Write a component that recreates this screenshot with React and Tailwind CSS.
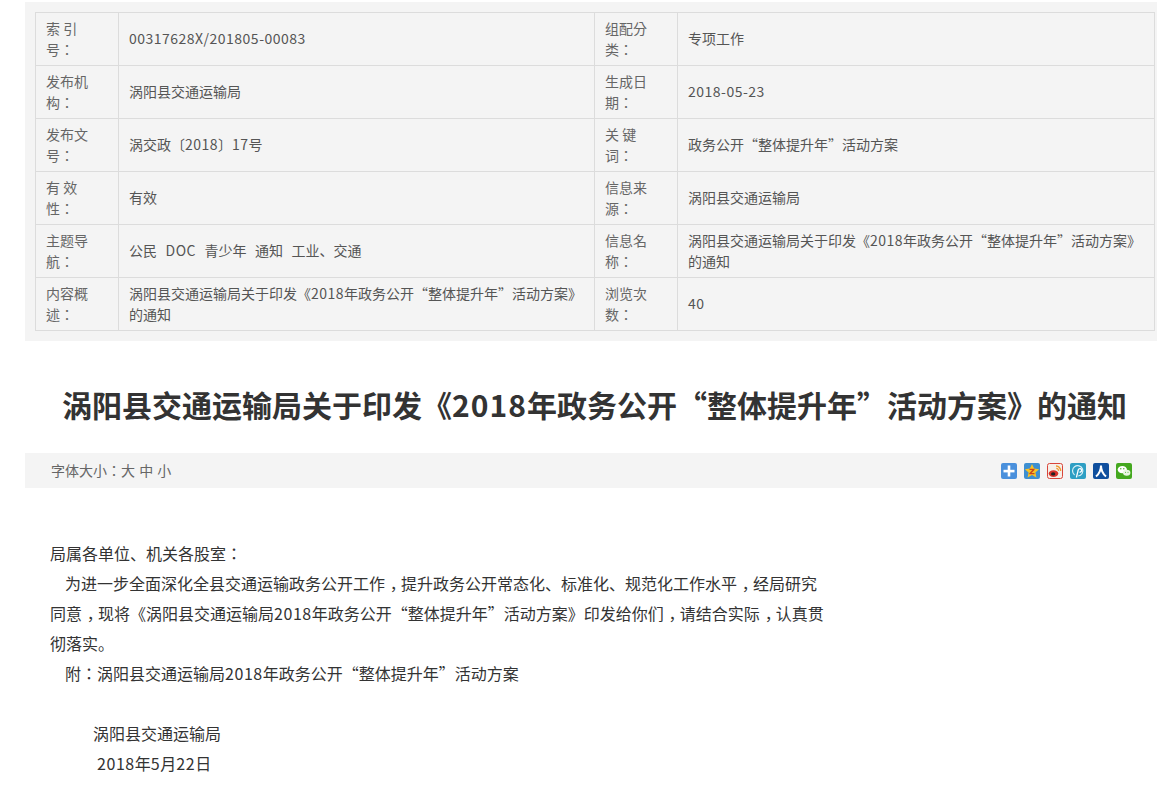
const rows = [
  ['索 引号：', '00317628X/201805-00083', '组配分类：', '专项工作'],
  ['发布机构：', '涡阳县交通运输局', '生成日期：', '2018-05-23'],
  ['发布文号：', '涡交政〔2018〕17号', '关 键词：', '政务公开“整体提升年”活动方案'],
  ['有 效性：', '有效', '信息来源：', '涡阳县交通运输局'],
  ['主题导航：', '公民   DOC   青少年   通知   工业、交通', '信息名称：', '涡阳县交通运输局关于印发《2018年政务公开“整体提升年”活动方案》\n的通知'],
  ['内容概述：', '涡阳县交通运输局关于印发《2018年政务公开“整体提升年”活动方案》\n的通知', '浏览次数：', '40'],
];

// latin runs run a bit wider in the original, and its colons and commas sit further right
function T({ children }) {
  return children.split(/([0-9A-Z/-]+|，|：)/).map((part, i) => {
    if (part === '：') return <span key={i} className="font-['Noto_Sans_CJK_TC',sans-serif]">{part}</span>;
    if (part === '，') return <span key={i} className="[font-feature-settings:'halt'] pl-[0.3em] pr-[0.2em]">{part}</span>;
    if (i % 2 === 1) return <span key={i} className="tracking-[0.035em]">{part}</span>;
    return part;
  });
}

function Label({ children }) {
  return (
    <div className="border-r border-b border-[#dcdcdc] pl-[10px] pr-[24px] py-[5px] leading-[21px] text-[14px] text-[#666] font-['Noto_Sans_CJK_TC',sans-serif]">
      {children}
    </div>
  );
}

function Value({ children }) {
  const lines = children.split('\n');
  return (
    <div className={lines.length > 1
      ? 'border-r border-b border-[#dcdcdc] px-[10px] flex flex-col justify-center leading-[21px] text-[14px] text-[#555] whitespace-pre'
      : 'border-r border-b border-[#dcdcdc] px-[10px] pb-[2px] flex flex-col justify-center leading-[21px] text-[14px] text-[#555] whitespace-pre [word-spacing:-0.3px]'}>
      {lines.map((line, i) => <div key={i}><T>{line}</T></div>)}
    </div>
  );
}

function ShareIcons() {
  return (
    <div className="flex gap-[7px]">
      <svg width="16" height="16" viewBox="0 0 16 16">
        <rect width="16" height="16" rx="2" fill="#4a90dc" />
        <rect x="2.5" y="6.8" width="11" height="2.6" fill="#fff" />
        <rect x="6.7" y="2.5" width="2.6" height="11" fill="#fff" />
      </svg>
      <svg width="16" height="16" viewBox="0 0 16 16">
        <rect width="16" height="16" rx="2" fill="#3d8fd1" />
        <path d="M8 1l2.1 4.6 5 .6-3.7 3.3 1 4.9L8 11.9l-4.4 2.5 1-4.9L.9 6.2l5-.6z" fill="#f7c325" />
        <path d="M5.5 5.8h5v1.1l-3 3.2h3v1.2h-5.2v-1.1l3-3.2H5.5z" fill="#c8451d" />
      </svg>
      <svg width="16" height="16" viewBox="0 0 16 16">
        <rect x=".5" y=".5" width="15" height="15" rx="2" fill="#f6efe8" stroke="#d8453a" />
        <ellipse cx="6.5" cy="10.6" rx="4.8" ry="3.4" fill="#d8332c" />
        <ellipse cx="6.2" cy="10.9" rx="2.2" ry="1.7" fill="#222" />
        <path d="M9 3a4.5 4.5 0 0 1 4.6 5" fill="none" stroke="#ee9a2e" strokeWidth="1.4" />
        <path d="M9.3 5.3a2.2 2.2 0 0 1 2.1 2.6" fill="none" stroke="#ee9a2e" strokeWidth="1.2" />
      </svg>
      <svg width="16" height="16" viewBox="0 0 16 16">
        <rect width="16" height="16" rx="2" fill="#2e9fc4" />
        <path d="M4.6 12a5.2 5.2 0 1 1 3.6 1" fill="none" stroke="#d8f0f7" strokeWidth="1.2" />
        <path d="M6.4 14.5l1.8-7.3a1.7 1.7 0 1 1 1.2 1.8" fill="none" stroke="#fff" strokeWidth="1.3" />
      </svg>
      <svg width="16" height="16" viewBox="0 0 16 16">
        <rect width="16" height="16" rx="2" fill="#0f4f9e" />
        <path d="M8 2.5c0 4.5-1.5 8-5 11M8 2.5c0 4.5 1.5 8 5 11" fill="none" stroke="#fff" strokeWidth="2" />
      </svg>
      <svg width="16" height="16" viewBox="0 0 16 16">
        <rect width="16" height="16" rx="2" fill="#44a81f" />
        <ellipse cx="6.3" cy="6.6" rx="4.6" ry="3.7" fill="#fff" />
        <ellipse cx="10.7" cy="9.8" rx="3.7" ry="3" fill="#e9f6e2" />
        <circle cx="4.8" cy="5.8" r=".7" fill="#44a81f" />
        <circle cx="7.8" cy="5.8" r=".7" fill="#44a81f" />
        <circle cx="9.5" cy="9.2" r=".5" fill="#44a81f" />
        <circle cx="12" cy="9.2" r=".5" fill="#44a81f" />
      </svg>
    </div>
  );
}

export default function App() {
  return (
    <div className="bg-white min-h-[787px] overflow-hidden pl-[25px] pt-[2px] font-['Noto_Sans_CJK_SC',sans-serif]">
      {/* Info table */}
      <div className="bg-[#f4f4f4] pl-[10px] pr-[2px] pt-[10px] pb-[10px]">
        <div className="grid grid-cols-[83px_476px_83px_1fr] auto-rows-[53px] border-t border-l border-[#dcdcdc]">
          {rows.map((row, i) => [
            <Label key={i + 'a'}>{row[0]}</Label>,
            <Value key={i + 'b'}>{row[1]}</Value>,
            <Label key={i + 'c'}>{row[2]}</Label>,
            <Value key={i + 'd'}>{row[3]}</Value>,
          ])}
        </div>
      </div>

      <h1 className="mt-[38px] h-[50px] leading-[50px] pl-[37px] text-[30px] font-bold text-[#333] whitespace-nowrap">
        <T>涡阳县交通运输局关于印发《2018年政务公开“整体提升年”活动方案》的通知</T>
      </h1>

      {/* Font size bar */}
      <div className="mt-[24px] h-[35px] bg-[#f4f4f4] flex items-center justify-between pl-[26px] pr-[25px]">
        <div className="text-[14px] text-[#666] [word-spacing:1px]"><T>字体大小：大 中 小</T></div>
        <ShareIcons />
      </div>

      {/* Article */}
      <div className="mt-[50px] pl-[25px] text-[16px] leading-[30px] text-[#333] whitespace-pre">
        <p><T>局属各单位、机关各股室：</T></p>
        <p className="pl-[15px]"><T>为进一步全面深化全县交通运输政务公开工作，提升政务公开常态化、标准化、规范化工作水平，经局研究</T></p>
        <p><T>同意，现将《涡阳县交通运输局2018年政务公开“整体提升年”活动方案》印发给你们，请结合实际，认真贯</T></p>
        <p>彻落实。</p>
        <p className="pl-[15px]"><T>附：涡阳县交通运输局2018年政务公开“整体提升年”活动方案</T></p>
        <p className="h-[30px]"></p>
        <p className="pl-[43px]">涡阳县交通运输局</p>
        <p className="pl-[47px]"><T>2018年5月22日</T></p>
      </div>
    </div>
  );
}
